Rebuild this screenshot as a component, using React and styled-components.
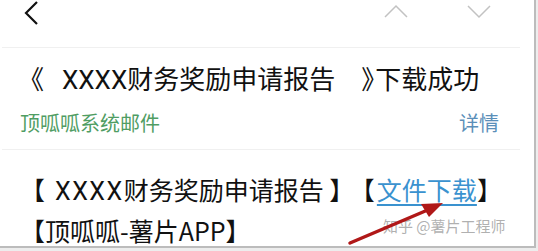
import React from "react";
import styled, { createGlobalStyle } from "styled-components";

const Global = createGlobalStyle`
  html, body { margin: 0; padding: 0; background: #ededed; }
  body { font-family: "Noto Sans CJK SC", "Noto Sans", sans-serif; }
`;

const Frame = styled.div`
  position: relative;
  width: 534px;
  height: 246px;
  background: #fff;
  border-right: 2px solid #bcbcbc;
  border-bottom: 2px solid #bcbcbc;
  overflow: hidden;
  display: flex;
  flex-direction: column;
`;

const Header = styled.div`
  height: 48px;
  flex: none;
  box-sizing: border-box;
  border-bottom: 1px solid #f0f0f0;
  margin: 0 14px 0 2px;
  display: flex;
  align-items: flex-start;
  padding: 0 0 0 20px;
`;

const NavIcon = styled.svg`
  display: block;
  flex: none;
  margin-right: ${(p) => p.$mr || 0}px;
`;

const Spacer = styled.div`
  flex: 1;
`;

const Section = styled.div`
  box-sizing: border-box;
  flex: none;
  margin: 0 14px 0 2px;
  padding: ${(p) => p.$pad};
  border-bottom: ${(p) => (p.$line ? "1px solid #f0f0f0" : "none")};
`;

const Title = styled.div`
  font-size: 26px;
  line-height: 34px;
  color: #111;
  white-space: nowrap;
  padding-left: 16px;
`;

const Gap = styled.span`
  display: inline-block;
  width: ${(p) => p.$w}px;
`;

const Latin = styled.span`
  font-family: Roboto, "Noto Sans", sans-serif;
  letter-spacing: ${(p) => p.$ls || 0}px;
`;

const Tight = styled.span`
  letter-spacing: ${(p) => p.$ls}px;
`;

const MetaRow = styled.div`
  display: flex;
  justify-content: space-between;
  align-items: center;
  margin-top: 12px;
  font-size: 20px;
  line-height: 28px;
`;

const Sender = styled.span`
  color: #4f9d63;
  margin-left: 18px;
`;

const Detail = styled.span`
  color: #5b8fb9;
  margin-right: 21px;
`;

const Body = styled.div`
  font-size: 25px;
  line-height: 39px;
  color: #111;
  white-space: nowrap;
  padding-left: 18px;
`;

const Link = styled.span`
  color: #3a92cf;
  text-decoration: underline;
  text-decoration-thickness: 2px;
  text-underline-offset: 4px;
`;

const Watermark = styled.div`
  position: absolute;
  left: 383px;
  top: 215px;
  font-size: 15px;
  color: rgba(150, 150, 150, 0.75);
  white-space: nowrap;
`;

const Arrow = styled.svg`
  position: absolute;
  left: 340px;
  top: 195px;
`;

export default function App() {
  return (
    <>
      <Global />
      <Frame>
        <Header>
          <NavIcon width="20" height="26" viewBox="0 0 20 26">
            <polyline points="15,2 4,13 15,24" fill="none" stroke="#111" strokeWidth="2.2" />
          </NavIcon>
          <Spacer />
          <NavIcon $mr={57} width="26" height="22" viewBox="0 0 26 22">
            <polyline points="2,17 13,6 24,17" fill="none" stroke="#c2c2c2" strokeWidth="1.5" />
          </NavIcon>
          <NavIcon $mr={28} width="26" height="22" viewBox="0 0 26 22">
            <polyline points="2,6 13,17 24,6" fill="none" stroke="#c2c2c2" strokeWidth="1.5" />
          </NavIcon>
        </Header>
        <Section $line $pad="13px 0 12px 0">
          <Title>
            《<Gap $w={18} />
            <Latin>XXXX</Latin>财务奖励申请报告<Gap $w={26} />
            <Tight $ls={-12}>》</Tight>下载成功
          </Title>
          <MetaRow>
            <Sender>顶呱呱系统邮件</Sender>
            <Detail>详情</Detail>
          </MetaRow>
        </Section>
        <Section $pad="20px 0 0 0">
          <Body>
            【<Gap $w={10} />
            <Latin $ls={1.5}>XXXX</Latin>财务奖励申请报告 <Tight $ls={8}>】</Tight>
            <Tight $ls={2}>【</Tight>
            <Link>文件下载</Link>】
          </Body>
          <Body>【顶呱呱-薯片APP】</Body>
        </Section>
        <Watermark>知乎 @薯片工程师</Watermark>
        <Arrow width="110" height="56" viewBox="0 0 110 56">
          <line x1="10" y1="48" x2="90" y2="14" stroke="#b01818" strokeWidth="3.5" strokeLinecap="round" />
          <polygon points="103,8 81,9 89,22" fill="#b01818" />
        </Arrow>
      </Frame>
    </>
  );
}
